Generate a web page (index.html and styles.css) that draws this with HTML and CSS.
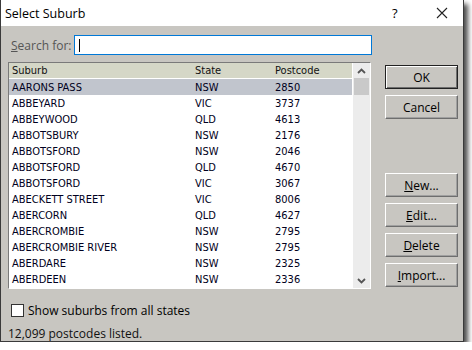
FILE: index.html
```html
<!DOCTYPE html>
<html lang="en">
<head>
    <meta charset="UTF-8">
    <title>Select Suburb</title>
    <link rel="stylesheet" href="styles.css">
</head>
<body>
    <div class="window">
        <div class="titlebar">
            <span class="title">Select Suburb</span>
            <span class="help">?</span>
            <span class="close">
                <svg width="12" height="12" viewBox="0 0 12 12"><path d="M1 1L11 11M11 1L1 11" stroke="#222" stroke-width="1.1" fill="none"/></svg>
            </span>
        </div>
        <div class="content">
            <div class="left">
                <div class="search">
                    <label><u>S</u>earch for:</label>
                    <div class="input"><span class="caret"></span></div>
                </div>
                <div class="listbox">
                    <div class="rows">
                        <div class="row head"><span class="c1">Suburb</span><span class="c2">State</span><span class="c3">Postcode</span></div>
                        <div class="row sel"><span class="c1">AARONS PASS</span><span class="c2">NSW</span><span class="c3">2850</span></div>
                        <div class="row"><span class="c1">ABBEYARD</span><span class="c2">VIC</span><span class="c3">3737</span></div>
                        <div class="row"><span class="c1">ABBEYWOOD</span><span class="c2">QLD</span><span class="c3">4613</span></div>
                        <div class="row"><span class="c1">ABBOTSBURY</span><span class="c2">NSW</span><span class="c3">2176</span></div>
                        <div class="row"><span class="c1">ABBOTSFORD</span><span class="c2">NSW</span><span class="c3">2046</span></div>
                        <div class="row"><span class="c1">ABBOTSFORD</span><span class="c2">QLD</span><span class="c3">4670</span></div>
                        <div class="row"><span class="c1">ABBOTSFORD</span><span class="c2">VIC</span><span class="c3">3067</span></div>
                        <div class="row"><span class="c1">ABECKETT STREET</span><span class="c2">VIC</span><span class="c3">8006</span></div>
                        <div class="row"><span class="c1">ABERCORN</span><span class="c2">QLD</span><span class="c3">4627</span></div>
                        <div class="row"><span class="c1">ABERCROMBIE</span><span class="c2">NSW</span><span class="c3">2795</span></div>
                        <div class="row"><span class="c1">ABERCROMBIE RIVER</span><span class="c2">NSW</span><span class="c3">2795</span></div>
                        <div class="row"><span class="c1">ABERDARE</span><span class="c2">NSW</span><span class="c3">2325</span></div>
                        <div class="row"><span class="c1">ABERDEEN</span><span class="c2">NSW</span><span class="c3">2336</span></div>
                    </div>
                    <div class="scrollbar">
                        <svg class="arrow" width="9" height="6" viewBox="0 0 9 6"><path d="M1 5L4.5 1.5L8 5" stroke="#555" stroke-width="1.8" fill="none"/></svg>
                        <div class="thumb"></div>
                        <div class="track"></div>
                        <svg class="arrow" width="9" height="6" viewBox="0 0 9 6"><path d="M1 1L4.5 4.5L8 1" stroke="#555" stroke-width="1.8" fill="none"/></svg>
                    </div>
                </div>
                <div class="check">
                    <span class="box"></span>
                    <span>Show suburbs from all states</span>
                </div>
                <div class="status">12,099 postcodes listed.</div>
            </div>
            <div class="buttons">
                <button class="btn default">OK</button>
                <button class="btn">Cancel</button>
                <div class="spacer"></div>
                <button class="btn"><u>N</u>ew...</button>
                <button class="btn"><u>E</u>dit...</button>
                <button class="btn"><u>D</u>elete</button>
                <button class="btn"><u>I</u>mport...</button>
            </div>
        </div>
    </div>
</body>
</html>
```
FILE: styles.css
```css
body{
    margin: 0;
    background: #fff;
    font-family: 'Open Sans', 'Noto Sans', sans-serif;
}
.window{
    width: 464px;
    height: 342px;
    border: 1px solid #3a3a3a;
    border-top: none;
    box-sizing: border-box;
    background: #c8c6c1;
    box-shadow: 4px 4px 5px rgba(0,0,0,0.7);
    display: flex;
    flex-direction: column;
    overflow: hidden;
}
.titlebar{
    height: 26px;
    flex-shrink: 0;
    background: #fff;
    display: flex;
    align-items: center;
    font-size: 12.5px;
    color: #000;
}
.title{
    flex: 1;
    padding-left: 4px;
}
.help{
    width: 20px;
    font-size: 13px;
    margin-right: 24px;
}
.close{
    width: 27px;
    display: flex;
}
.content{
    flex: 1;
    display: flex;
    padding: 9px 0 0 7px;
}
.left{
    width: 364px;
    display: flex;
    flex-direction: column;
}
.search{
    display: flex;
    align-items: center;
    height: 20px;
    font-size: 12px;
    color: #555;
}
.search label{
    width: 64px;
    padding-left: 3px;
}
.input{
    width: 300px;
    height: 20px;
    box-sizing: border-box;
    border: 1px solid #0078d7;
    background: #fff;
    display: flex;
    align-items: center;
    padding-left: 4px;
}
.caret{
    width: 1px;
    height: 13px;
    background: #000;
}
.listbox{
    margin-top: 7px;
    width: 363px;
    height: 227px;
    flex-shrink: 0;
    box-sizing: border-box;
    border-top: 1px solid #7a7a7a;
    border-left: 1px solid #7a7a7a;
    border-right: 1px solid #fff;
    border-bottom: 1px solid #fff;
    background: #fff;
    display: flex;
    font-family: 'DejaVu Sans Condensed', 'DejaVu Sans', sans-serif;
    font-size: 11px;
    color: #000020;
}
.rows{
    flex: 1;
}
.row{
    display: flex;
    height: 16px;
    align-items: center;
}
.row.head{
    height: 15px;
    background: #d5d7c7;
    border-bottom: 1px solid #fff;
    color: #111;
}
.row.sel{
    background: #c1c5cd;
}
.c1{
    width: 183px;
    padding-left: 3px;
}
.c2{
    width: 80px;
}
.scrollbar{
    width: 17px;
    background: #ececec;
    border-left: 1px solid #fff;
    display: flex;
    flex-direction: column;
    align-items: center;
}
.arrow{
    margin: 5px 0 4px;
}
.thumb{
    width: 15px;
    height: 17px;
    background: #c9c9c9;
}
.track{
    flex: 1;
}
.check{
    display: flex;
    align-items: center;
    height: 16px;
    margin-top: 13px;
    padding-left: 3px;
    font-size: 12px;
    color: #000;
}
.box{
    width: 11px;
    height: 11px;
    border: 1px solid #333;
    background: #fff;
    margin-right: 4px;
}
.status{
    margin-top: 8px;
    line-height: 16px;
    font-size: 12px;
    color: #111;
}
.buttons{
    display: flex;
    flex-direction: column;
    margin-left: 13px;
    margin-top: 30px;
}
.btn{
    width: 73px;
    height: 24px;
    flex-shrink: 0;
    margin-bottom: 6px;
    background: #c8c6c1;
    border: 1px solid;
    border-color: #fff #6e6e6e #6e6e6e #fff;
    box-shadow: inset -1px -1px 0 #a0a0a0;
    font-family: 'Open Sans', 'Noto Sans', sans-serif;
    font-size: 12px;
    color: #000;
    padding: 0;
}
.btn.default{
    border: 1px solid #222;
    box-shadow: inset 1px 1px 0 #fff, inset -1px -1px 0 #6e6e6e;
}
.spacer{
    height: 48px;
    flex-shrink: 0;
}
```
